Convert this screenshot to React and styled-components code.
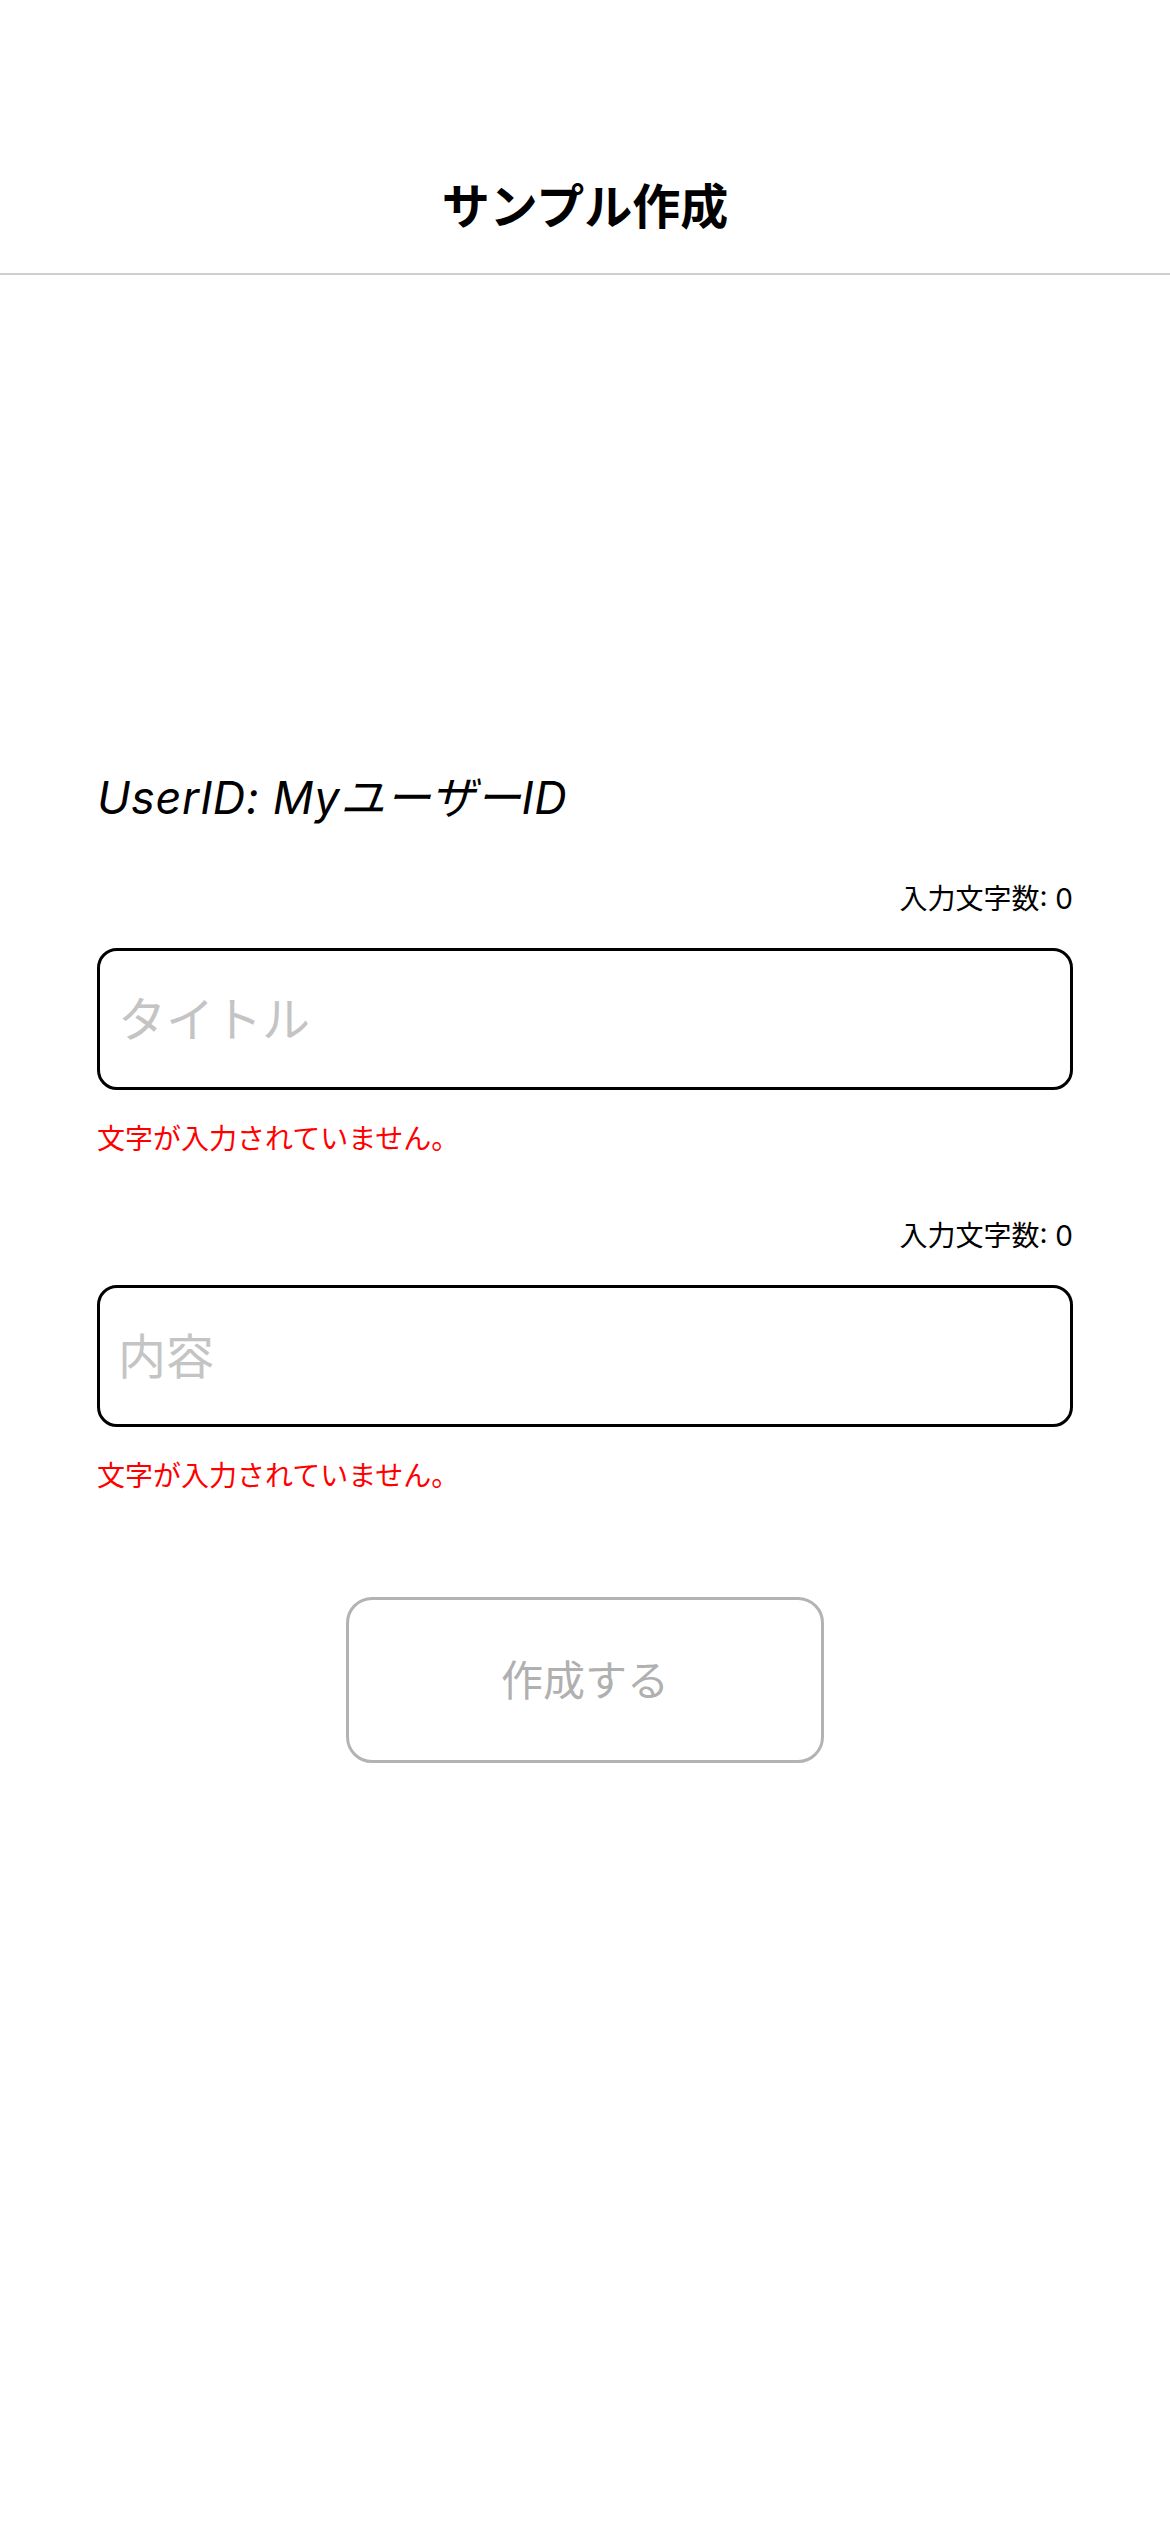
import React, { useState } from 'react'
import styled, { createGlobalStyle } from 'styled-components'

const GlobalStyle = createGlobalStyle`
  body {
    margin: 0;
    background: #ffffff;
    font-family: Inter, 'Noto Sans CJK JP', sans-serif;
    color: #000000;
  }
`

const Header = styled.header`
  box-sizing: border-box;
  height: 275px;
  padding-top: 141px;
  border-bottom: 2px solid #cfcfcf;
  display: flex;
  justify-content: center;
`

const Title = styled.h1`
  margin: 0;
  height: 132px;
  line-height: 132px;
  font-size: 48px;
  font-weight: 700;
  font-family: Inter, 'Noto Sans CJK JP', sans-serif;
`

const Main = styled.main`
  padding: 0 97px;
  display: flex;
  flex-direction: column;
`

const UserLine = styled.p`
  margin: 493px 0 0;
  line-height: 60px;
  font-size: 45px;
  font-style: italic;
  letter-spacing: 0.6px;
`

const FieldGroup = styled.div`
  display: flex;
  flex-direction: column;
  gap: 29px;
  margin-top: ${p => p.$top}px;
`

const Counter = styled.div`
  text-align: right;
  line-height: 40px;
  font-size: 28px;
`

const TextInput = styled.input`
  box-sizing: border-box;
  width: 100%;
  height: 142px;
  margin: 0;
  padding: 0 18px;
  border: 3px solid #000000;
  border-radius: 20px;
  outline: none;
  font-size: 48px;
  font-family: Inter, 'Noto Sans CJK JP', sans-serif;
  background: #ffffff;
  &::placeholder {
    color: #c4c4c4;
  }
`

const ErrorText = styled.div`
  line-height: 40px;
  font-size: 28px;
  color: #ff0000;
`

const SubmitButton = styled.button`
  align-self: center;
  box-sizing: border-box;
  width: 478px;
  height: 166px;
  margin-top: 101px;
  padding: 0 0 5px;
  border: 3px solid #b3b3b3;
  border-radius: 26px;
  background: #ffffff;
  color: #b0b0b0;
  font-size: 42px;
  font-family: Inter, 'Noto Sans CJK JP', sans-serif;
`

const strings = {
  title: 'サンプル作成',
  user: 'UserID: Myユーザー ID',
  count: '入力文字数: ',
  titleHolder: 'タイトル',
  bodyHolder: '内容',
  empty: '文字が入力されていません。',
  submit: '作成する',
}

const Field = ({ top, value, onChange, placeholder }) => (
  <FieldGroup $top={top}>
    <Counter>{strings.count}{value.length}</Counter>
    <TextInput value={value} onChange={e => onChange(e.target.value)} placeholder={placeholder} />
    {value.length === 0 && <ErrorText>{strings.empty}</ErrorText>}
  </FieldGroup>
)

const App = () => {
  const [title, setTitle] = useState('')
  const [body, setBody] = useState('')

  return (
    <>
      <GlobalStyle />
      <Header>
        <Title>{strings.title}</Title>
      </Header>
      <Main>
        <UserLine>{strings.user.replace(' ID', 'ID')}</UserLine>
        <Field top={51} value={title} onChange={setTitle} placeholder={strings.titleHolder} />
        <Field top={57} value={body} onChange={setBody} placeholder={strings.bodyHolder} />
        <SubmitButton disabled={!title || !body}>{strings.submit}</SubmitButton>
      </Main>
    </>
  )
}

export default App
